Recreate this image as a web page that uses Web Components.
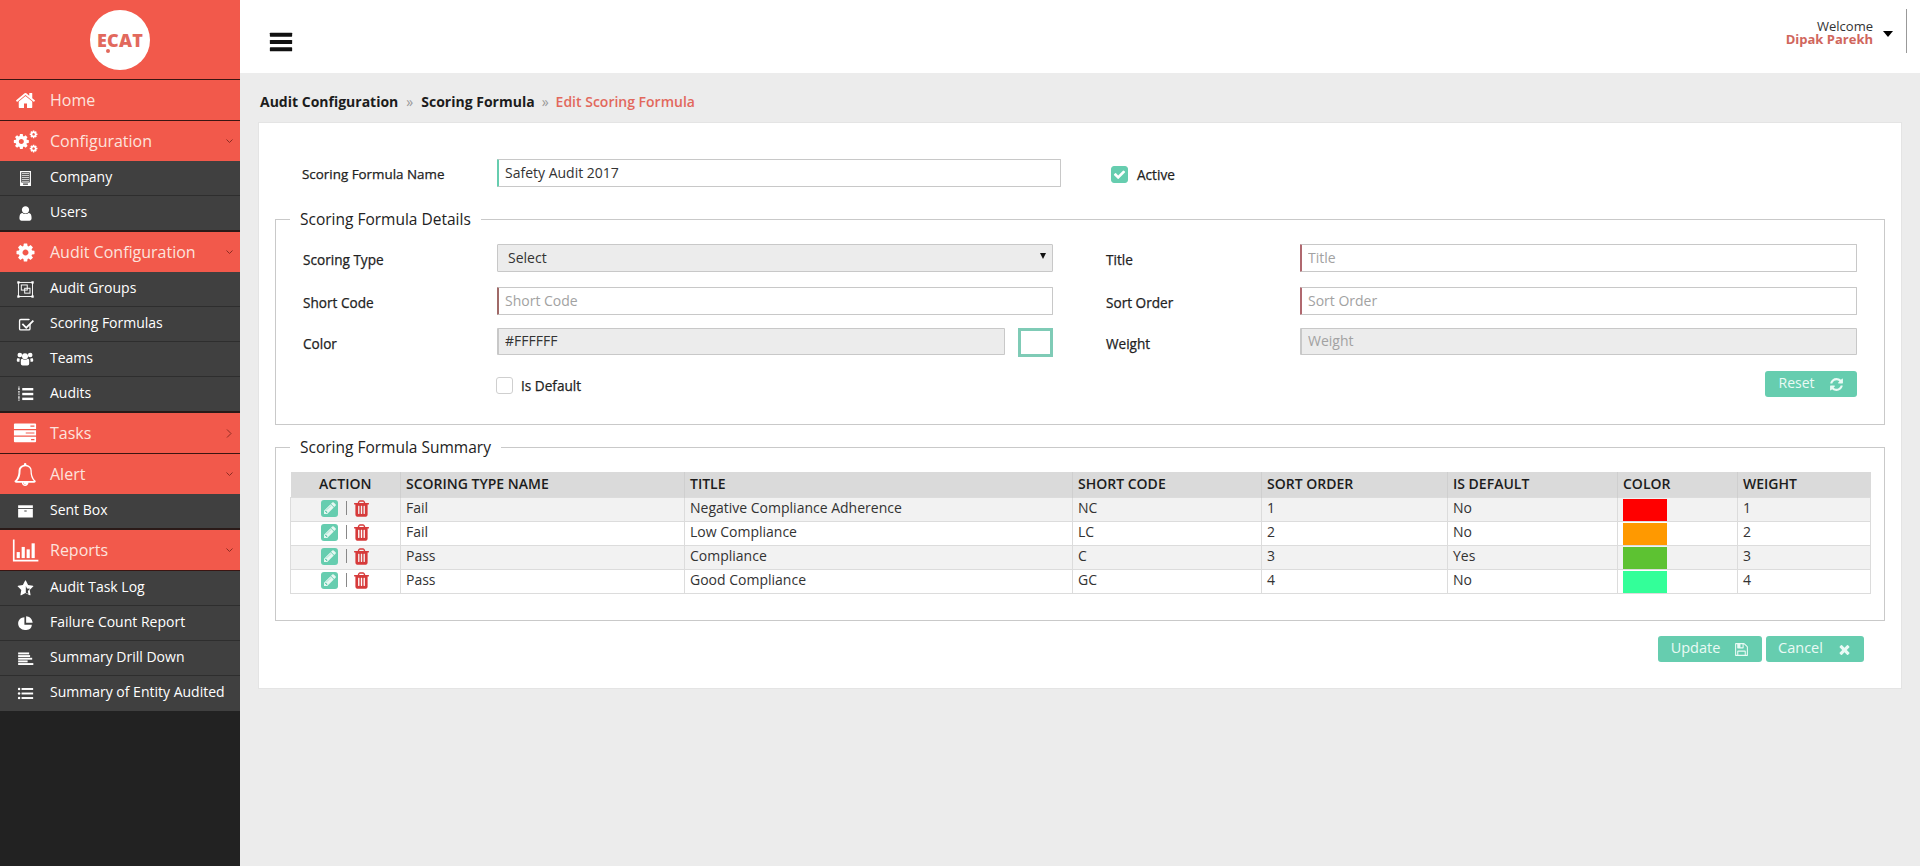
<!DOCTYPE html>
<html>
<head>
<meta charset="utf-8">
<title>Edit Scoring Formula</title>
<style>
  html, body { margin: 0; height: 100%; background: #ececec; }
  body { font-family: "Open Sans", sans-serif; color: #222; overflow: hidden; }
</style>
</head>
<body>
<ec-app>
  <ec-sidebar slot="sidebar">
    <ec-nav-head icon="home" line>Home</ec-nav-head>
    <ec-nav-head icon="cogs" chevron="down">Configuration</ec-nav-head>
    <ec-nav-item icon="building">Company</ec-nav-item>
    <ec-nav-item icon="user" last>Users</ec-nav-item>
    <ec-nav-head icon="cog" chevron="down">Audit Configuration</ec-nav-head>
    <ec-nav-item icon="group">Audit Groups</ec-nav-item>
    <ec-nav-item icon="checksq">Scoring Formulas</ec-nav-item>
    <ec-nav-item icon="users">Teams</ec-nav-item>
    <ec-nav-item icon="listol" last>Audits</ec-nav-item>
    <ec-nav-head icon="tasks" chevron="right" line>Tasks</ec-nav-head>
    <ec-nav-head icon="bell" chevron="down">Alert</ec-nav-head>
    <ec-nav-item icon="archive" last>Sent Box</ec-nav-item>
    <ec-nav-head icon="chart" chevron="down" line>Reports</ec-nav-head>
    <ec-nav-item icon="star">Audit Task Log</ec-nav-item>
    <ec-nav-item icon="pie">Failure Count Report</ec-nav-item>
    <ec-nav-item icon="align">Summary Drill Down</ec-nav-item>
    <ec-nav-item icon="list" end>Summary of Entity Audited</ec-nav-item>
  </ec-sidebar>
  <ec-header slot="header"></ec-header>
  <ec-breadcrumb>
    <span>Audit Configuration</span><span>Scoring Formula</span><span>Edit Scoring Formula</span>
  </ec-breadcrumb>
  <ec-card>
    <ec-name-row></ec-name-row>
    <ec-fieldset legend="Scoring Formula Details"><ec-details-form></ec-details-form></ec-fieldset>
    <ec-fieldset legend="Scoring Formula Summary" summary><ec-summary-table></ec-summary-table></ec-fieldset>
    <ec-actions></ec-actions>
  </ec-card>
</ec-app>

<script>
// font-awesome style glyphs on a 1792 grid, the rest drawn by hand
const COG = 'M1152 896q0-106-75-181t-181-75-181 75-75 181 75 181 181 75 181-75 75-181zm512-109v222q0 12-8 23t-20 13l-185 28q-19 54-39 91 35 50 107 138 10 12 10 25t-9 23q-27 37-99 108t-94 71q-12 0-26-9l-138-108q-44 23-91 38-16 136-29 186-7 28-36 28h-222q-14 0-24.5-8.5t-11.5-21.5l-28-184q-49-16-90-37l-141 107q-10 9-25 9-14 0-25-11-126-114-165-168-7-10-7-23 0-12 8-23 15-21 51-66.5t54-70.5q-27-50-41-99l-183-27q-13-2-21-12.5t-8-23.5v-222q0-12 8-23t19-13l186-28q14-46 39-92-40-57-107-138-10-12-10-24 0-10 9-23 26-36 98.5-107.5t94.5-71.5q13 0 26 10l138 107q44-23 91-38 16-136 29-186 7-28 36-28h222q14 0 24.5 8.5t11.5 21.5l28 184q49 16 90 37l142-107q9-9 24-9 13 0 25 10 129 119 165 170 7 8 7 22 0 12-8 23-15 21-51 66.5t-54 70.5q26 50 41 98l183 28q13 2 21 12.5t8 23.5z';
const STAR = 'M1728 647q0 22-26 48l-363 354 86 500q1 7 1 20 0 21-10.5 35.5t-30.5 14.5q-19 0-40-12l-449-236-449 236q-22 12-40 12-21 0-31.5-14.5t-10.5-35.5q0-6 2-20l86-500-364-354q-25-27-25-48 0-37 56-46l502-73 225-455q19-41 49-41t49 41l225 455 502 73q56 9 56 46z';
const ICONS = {
  home: '<path d="M1472 992v480q0 26-19 45t-45 19h-384v-384h-256v384h-384q-26 0-45-19t-19-45v-480q0-1 .5-3t.5-3l575-474 575 474q1 2 1 6zm223-69l-62 74q-8 9-21 11h-3q-13 0-21-7l-692-577-692 577q-12 8-24 7-13-2-21-11l-62-74q-8-10-7-23.5t11-21.5l719-599q32-26 76-26t76 26l244 204v-195q0-14 9-23t23-9h192q14 0 23 9t9 23v408l219 182q10 8 11 21.5t-7 23.5z"/>',
  cog: `<path d="${COG}"/>`,
  user: '<path d="M1536 1399q0 109-62.5 187t-150.5 78h-854q-88 0-150.5-78t-62.5-187q0-85 8.5-160.5t31.5-152 58.5-131 94-89 134.5-34.5q131 128 313 128t313-128q76 0 134.5 34.5t94 89 58.5 131 31.5 152 8.5 160.5zm-256-887q0 159-112.5 271.5t-271.5 112.5-271.5-112.5-112.5-271.5 112.5-271.5 271.5-112.5 271.5 112.5 112.5 271.5z"/>',
  bell: '<path d="M912 1696q0-16-16-16-59 0-101.5-42.5t-42.5-101.5q0-16-16-16t-16 16q0 73 51.5 124.5t124.5 51.5q16 0 16-16zm-666-288h1300q-266-300-266-832 0-51-24-105t-69-103-121.5-80.5-169.5-31.5-169.5 31.5-121.5 80.5-69 103-24 105q0 532-266 832zm1454 0q0 52-38 90t-90 38h-448q0 106-75 181t-181 75-181-75-75-181h-448q-52 0-90-38t-38-90q50-42 91-88t85-119.5 74.5-158.5 50-206 19.5-260q0-152 117-282.5t307-158.5q-8-19-8-39 0-40 28-68t68-28 68 28 28 68q0 20-8 39 190 28 307 158.5t117 282.5q0 139 19.5 260t50 206 74.5 158.5 85 119.5 91 88z"/>',
  star: `<path d="${STAR}"/><path fill="#404040" d="M930 620l130 270 320 45-235 225 55 320-270-140z"/>`,
  trash: '<path d="M704 1376v-704q0-14-9-23t-23-9h-64q-14 0-23 9t-9 23v704q0 14 9 23t23 9h64q14 0 23-9t9-23zm256 0v-704q0-14-9-23t-23-9h-64q-14 0-23 9t-9 23v704q0 14 9 23t23 9h64q14 0 23-9t9-23zm256 0v-704q0-14-9-23t-23-9h-64q-14 0-23 9t-9 23v704q0 14 9 23t23 9h64q14 0 23-9t9-23zm-544-992h448l-48-117q-7-9-17-11h-317q-10 2-17 11zm928 32v64q0 14-9 23t-23 9h-96v948q0 83-47 143.5t-113 60.5h-832q-66 0-113-58.5t-47-141.5v-952h-96q-14 0-23-9t-9-23v-64q0-14 9-23t23-9h309l70-167q15-37 54-63t79-26h320q40 0 79 26t54 63l70 167h309q14 0 23 9t9 23z"/>',
  pencil: '<path d="M491 1536l91-91-235-235-91 91v107h128v128h107zm523-928q0-22-22-22-10 0-17 7l-542 542q-7 7-7 17 0 22 22 22 10 0 17-7l542-542q7-7 7-17zm-54-192l416 416-832 832h-416v-416zm683 96q0 53-37 90l-166 166-416-416 166-165q36-38 90-38 53 0 91 38l235 234q37 39 37 91z"/>',
  close: '<path d="M1490 1322q0 40-28 68l-136 136q-28 28-68 28t-68-28l-294-294-294 294q-28 28-68 28t-68-28l-136-136q-28-28-28-68t28-68l294-294-294-294q-28-28-28-68t28-68l136-136q28-28 68-28t68 28l294 294 294-294q28-28 68-28t68 28l136 136q28 28 28 68t-28 68l-294 294 294 294q28 28 28 68z"/>',
  save: '<path d="M512 1536h768v-384h-768v384zm896 0h128v-896q0-14-10-38.5t-20-34.5l-281-281q-10-10-34-20t-39-10v416q0 40-28 68t-68 28h-576q-40 0-68-28t-28-68v-416h-128v1280h128v-416q0-40 28-68t68-28h832q40 0 68 28t28 68v416zm-384-928v-320q0-13-9.5-22.5t-22.5-9.5h-192q-13 0-22.5 9.5t-9.5 22.5v320q0 13 9.5 22.5t22.5 9.5h192q13 0 22.5-9.5t9.5-22.5zm640 32v928q0 40-28 68t-68 28h-1344q-40 0-68-28t-28-68v-1344q0-40 28-68t68-28h928q40 0 88 20t76 48l280 280q28 28 48 76t20 88z"/>',
  refresh: '<path d="M1639 1056q0 5-1 7-64 268-268 434.5t-478 166.5q-146 0-282.5-55t-243.5-157l-129 129q-19 19-45 19t-45-19-19-45v-448q0-26 19-45t45-19h448q26 0 45 19t19 45-19 45l-137 137q71 66 161 102t187 36q134 0 250-65t186-179q11-17 53-117 8-23 30-23h192q13 0 22.5 9.5t9.5 22.5zm25-800v448q0 26-19 45t-45 19h-448q-26 0-45-19t-19-45 19-45l138-138q-148-137-349-137-134 0-250 65t-186 179q-11 17-53 117-8 23-30 23h-199q-13 0-22.5-9.5t-9.5-22.5v-7q65-268 270-434.5t480-166.5q146 0 284 55.5t245 156.5l130-129q19-19 45-19t45 19 19 45z"/>',
  check: '<path d="M1671 566q0 40-28 68l-724 724-136 136q-28 28-68 28t-68-28l-136-136-362-362q-28-28-28-68t28-68l136-136q28-28 68-28t68 28l294 295 656-657q28-28 68-28t68 28l136 136q28 28 28 68z"/>',
  bars: '<rect x="128" y="260" width="1536" height="270" rx="40"/><rect x="128" y="761" width="1536" height="270" rx="40"/><rect x="128" y="1262" width="1536" height="270" rx="40"/>',
  cogs: `<g transform="translate(-30 269) scale(.7)"><path d="${COG}"/></g><g transform="translate(1154 57) scale(.36)"><path d="${COG}"/></g><g transform="translate(1154 1078) scale(.36)"><path d="${COG}"/></g>`,
  building: '<path fill-rule="evenodd" d="M320 100h1152v1592H320zM448 230v1080h896V230zM640 1420v130h512v-130z"/><g opacity=".75"><rect x="520" y="320" width="750" height="120"/><rect x="520" y="530" width="750" height="120"/><rect x="520" y="740" width="750" height="120"/><rect x="520" y="950" width="750" height="120"/><rect x="520" y="1150" width="750" height="90"/></g>',
  group: '<g fill="none" stroke="currentColor" stroke-width="90"><rect x="230" y="230" width="1330" height="1330"/><rect x="500" y="470" width="560" height="480"/><rect x="820" y="780" width="500" height="460"/></g><rect x="120" y="120" width="220" height="220"/><rect x="1450" y="120" width="220" height="220"/><rect x="120" y="1450" width="220" height="220"/><rect x="1450" y="1450" width="220" height="220"/>',
  checksq: '<path d="M400 300h840q80 0 130 40l-110 110q-20-10-40-10H400q-60 0-60 60v840q0 60 60 60h840q60 0 60-60V960l140-140v520q0 200-200 200H400q-200 0-200-200V500q0-200 200-200z"/><path d="M1660 420l130 130-820 820-470-470 130-130 340 340z"/>',
  users: '<circle cx="896" cy="620" r="300"/><circle cx="380" cy="500" r="230"/><circle cx="1412" cy="500" r="230"/><path d="M480 1000q0-120 130-140 130 110 286 110t286-110q130 20 130 140v360q0 180-180 180H660q-180 0-180-180z"/><path d="M80 960q0-140 120-170 90 90 210 70-60 50-60 170v130H180q-100 0-100-100zM1712 960q0-140-120-170-90 90-210 70 60 50 60 170v130h170q100 0 100-100z"/>',
  listol: '<rect x="620" y="300" width="1100" height="240"/><rect x="620" y="780" width="1100" height="240"/><rect x="620" y="1260" width="1100" height="240"/><rect x="200" y="170" width="180" height="70"/><rect x="200" y="300" width="180" height="70"/><rect x="200" y="430" width="180" height="70"/><rect x="200" y="620" width="180" height="70"/><rect x="200" y="750" width="180" height="70"/><rect x="200" y="880" width="180" height="70"/><rect x="200" y="1080" width="180" height="70"/><rect x="200" y="1210" width="180" height="70"/><rect x="200" y="1340" width="180" height="70"/><rect x="200" y="1470" width="180" height="70"/>',
  tasks: '<path fill-rule="evenodd" d="M70 250q0-70 70-70h1512q70 0 70 70v350H70zM1300 340v90h300v-90z"/><path fill-rule="evenodd" d="M70 690h1652v400H70zM950 850v90h650v-90z"/><path fill-rule="evenodd" d="M70 1180h1652v340q0 70-70 70H140q-70 0-70-70zM1350 1340v90h250v-90z"/>',
  archive: '<rect x="120" y="240" width="1550" height="300"/><path fill-rule="evenodd" d="M120 640h1550v900H120zM770 800v90h250v-90z"/>',
  chart: '<path d="M60 160h110v1350h1580v120H60z"/><rect x="310" y="1000" width="210" height="400"/><rect x="640" y="660" width="210" height="740"/><rect x="970" y="820" width="210" height="580"/><rect x="1300" y="420" width="210" height="980"/>',
  pie: '<path d="M780 240v780h780c0 420-340 560-720 560-400 0-720-300-720-680 0-360 300-660 660-660z"/><path d="M960 140c340 0 650 290 690 690H960z"/>',
  align: '<rect x="120" y="260" width="1160" height="200"/><rect x="120" y="540" width="1260" height="200"/><rect x="120" y="820" width="1480" height="200"/><rect x="120" y="1100" width="1000" height="200"/><rect x="120" y="1380" width="1600" height="200"/>',
  list: '<circle cx="220" cy="420" r="130"/><circle cx="220" cy="896" r="130"/><circle cx="220" cy="1372" r="130"/><rect x="480" y="320" width="1220" height="200"/><rect x="480" y="796" width="1220" height="200"/><rect x="480" y="1272" width="1220" height="200"/>'
};

class EcIcon extends HTMLElement {
  connectedCallback() {
    const size = this.getAttribute('size') || 16;
    const h = this.getAttribute('h') || size;
    this.attachShadow({ mode: 'open' }).innerHTML = `
      <style>:host { display: inline-flex; flex: none; } svg { display: block; fill: currentColor; }</style>
      <svg viewBox="0 0 1792 1792" width="${size}" height="${h}" preserveAspectRatio="none">${ICONS[this.getAttribute('name')] || ''}</svg>`;
  }
}

class EcApp extends HTMLElement {
  constructor() {
    super();
    this.attachShadow({ mode: 'open' }).innerHTML = `
      <style>
        :host { display: grid; grid-template-columns: 240px 1fr; height: 866px; }
        main { display: flex; flex-direction: column; min-width: 0; background: #ececec; }
        .page { padding: 0 18px; }
      </style>
      <slot name="sidebar"></slot>
      <main>
        <slot name="header"></slot>
        <div class="page"><slot></slot></div>
      </main>`;
  }
}

class EcSidebar extends HTMLElement {
  constructor() {
    super();
    this.attachShadow({ mode: 'open' }).innerHTML = `
      <style>
        :host { display: flex; flex-direction: column; background: #222; height: 866px; }
        .logo { height: 79px; background: #f2594b; border-bottom: 1px solid #3a1512; display: flex; align-items: center; justify-content: center; flex: none; }
        .disc { width: 60px; height: 60px; box-sizing: border-box; padding-top: 1px; border-radius: 50%; background: #fff; display: flex; align-items: center; justify-content: center; position: relative;
                color: #e2695d; font: 800 18px "Open Sans", sans-serif; letter-spacing: .2px; }
        .dot { position: absolute; left: 16px; top: 39px; width: 4px; height: 4px; border-radius: 50%; background: #e2695d; }
      </style>
      <div class="logo"><div class="disc">ECAT<span class="dot"></span></div></div>
      <slot></slot>`;
  }
}

const CHEVRONS = {
  down: '<path d="M.5 .5l3 3 3-3" fill="none" stroke="#8f2c22" stroke-width="1"/>',
  right: '<path d="M1 .5l4 4-4 4" fill="none" stroke="#8f2c22" stroke-width="1"/>'
};

class EcNavHead extends HTMLElement {
  connectedCallback() {
    const chev = this.getAttribute('chevron');
    const name = this.getAttribute('icon');
    const line = this.hasAttribute('line');
    const wide = { cogs: 25, tasks: 24, chart: 27, bell: 23 }[name] || 21;
    this.attachShadow({ mode: 'open' }).innerHTML = `
      <style>
        :host { display: flex; align-items: center; height: 40px; background: #f2594b; ${line ? 'border-bottom: 1px solid #3a1512;' : ''} flex: none; color: #fde3dd; font-size: 16px; position: relative; }
        .ic { width: 50px; display: flex; justify-content: center; color: #fff; }
        .ch { position: absolute; right: 7px; top: ${chev === 'right' ? 16 : 18}px; }
      </style>
      <span class="ic"><ec-icon name="${name}" size="${wide}"></ec-icon></span>
      <slot></slot>
      ${chev ? `<svg class="ch" width="7" height="9" viewBox="0 0 7 9">${CHEVRONS[chev]}</svg>` : ''}`;
  }
}

class EcNavItem extends HTMLElement {
  connectedCallback() {
    const name = this.getAttribute('icon');
    const last = this.hasAttribute('last');
    const end = this.hasAttribute('end');
    const size = { group: 19, users: 18, listol: 18 }[name] || 17;
    this.attachShadow({ mode: 'open' }).innerHTML = `
      <style>
        :host { display: flex; align-items: center; height: 34px; background: #404040; color: #fff; font-size: 14px; flex: none;
                border-bottom: 1px solid ${end ? '#404040' : '#2e2e2e'}; ${last ? 'border-bottom-width: 2px; border-bottom-color: #2a1a18;' : ''} }
        .ic { width: 50px; display: flex; justify-content: center; }
        .tx { margin-top: -3px; }
      </style>
      <span class="ic"><ec-icon name="${name}" size="${size}"></ec-icon></span>
      <span class="tx"><slot></slot></span>`;
  }
}

class EcHeader extends HTMLElement {
  constructor() {
    super();
    this.attachShadow({ mode: 'open' }).innerHTML = `
      <style>
        :host { display: flex; align-items: center; justify-content: space-between; height: 73px; background: #fff; padding: 0 13px 0 28px; box-sizing: border-box; flex: none; }
        .burger { color: #111; margin-top: 11px; }
        .user { display: flex; align-items: center; height: 44px; margin-top: -11px; border-right: 1px solid #999; }
        .who { text-align: right; font-size: 13px; line-height: 13px; color: #333; margin-top: 4px; }
        .who b { display: block; color: #d0665c; font-weight: 700; }
        .caret { width: 0; height: 0; border: 5px solid transparent; border-top: 6px solid #000; border-bottom: 0; margin: 6px 13px 0 10px; }
      </style>
      <ec-icon class="burger" name="bars" size="26" h="26"></ec-icon>
      <div class="user">
        <div class="who">Welcome<b>Dipak Parekh</b></div>
        <div class="caret"></div>
      </div>`;
  }
}

class EcBreadcrumb extends HTMLElement {
  constructor() {
    super();
    this.attachShadow({ mode: 'open' }).innerHTML = `
      <style>
        :host { display: flex; align-items: center; height: 49px; padding-top: 9px; box-sizing: border-box; font-size: 14px; font-weight: 700; color: #1c1c1c; margin-top: -1px; margin-left: 2px; }
        ::slotted(span) { white-space: nowrap; }
        ::slotted(span:not(:last-child))::after { content: "»"; color: #999; font-weight: 400; margin: 0 8px; }
        ::slotted(span:nth-child(2))::after { margin: 0 7px; }
        ::slotted(span:last-child) { color: #e2685c; font-weight: 600; }
      </style>
      <slot></slot>`;
  }
}

class EcCard extends HTMLElement {
  constructor() {
    super();
    this.attachShadow({ mode: 'open' }).innerHTML = `
      <style>
        :host { display: block; height: 567px; box-sizing: border-box; margin-top: 1px; background: #fff; border: 1px solid #e4e4e4; padding: 0 16px; }
      </style>
      <slot></slot>`;
  }
}

class EcInput extends HTMLElement {
  connectedCallback() {
    const accent = this.getAttribute('accent');
    const ph = this.getAttribute('placeholder') || '';
    const val = this.getAttribute('value') || '';
    const off = this.hasAttribute('disabled');
    const hgt = this.getAttribute('height') || 28;
    this.attachShadow({ mode: 'open' }).innerHTML = `
      <style>
        :host { display: block; }
        input { display: block; width: 100%; height: ${hgt}px; box-sizing: border-box; font: 14px "Open Sans", sans-serif; color: #333; padding: 0 6px 2px;
                border: 1px solid #c8c8c8; border-left: 2px solid ${accent || '#c8c8c8'}; border-radius: 1px; outline: 0; background: ${off ? '#ececec' : '#fff'}; }
        input::placeholder { color: #a2a2a2; opacity: 1; }
      </style>
      <input placeholder="${ph}" value="${val}" ${off ? 'disabled' : ''}>`;
  }
}

class EcSelect extends HTMLElement {
  connectedCallback() {
    this.attachShadow({ mode: 'open' }).innerHTML = `
      <style>
        :host { display: block; position: relative; }
        select { display: block; width: 100%; height: 28px; appearance: none; -webkit-appearance: none; background: #ececec; border: 1px solid #c8c8c8; border-radius: 1px; font: 14px "Open Sans", sans-serif; color: #333; padding: 0 10px 2px; outline: 0; }
        .tri { position: absolute; right: 7px; top: 9px; width: 0; height: 0; border: 3px solid transparent; border-top: 6px solid #111; border-bottom: 0; }
      </style>
      <select><option>Select</option></select><span class="tri"></span>`;
  }
}

class EcCheck extends HTMLElement {
  connectedCallback() {
    const on = this.hasAttribute('checked');
    this.attachShadow({ mode: 'open' }).innerHTML = `
      <style>
        :host { display: inline-flex; align-items: center; font-size: 13.6px; color: #222; -webkit-text-stroke: .25px #222; }
        .box { width: 17px; height: 17px; box-sizing: border-box; border-radius: 3px; margin-right: ${on ? 9 : 8}px; display: flex; align-items: center; justify-content: center;
               border: 1px solid ${on ? '#66cdaf' : '#cfcfcf'}; background: ${on ? '#66cdaf' : '#fff'}; color: #fff; }
        .tx { margin-top: 0; }
      </style>
      <span class="box">${on ? '<ec-icon name="check" size="13"></ec-icon>' : ''}</span>
      <span class="tx"><slot></slot></span>`;
  }
}

class EcButton extends HTMLElement {
  connectedCallback() {
    const w = this.getAttribute('width');
    const ic = this.getAttribute('icon');
    this.attachShadow({ mode: 'open' }).innerHTML = `
      <style>
        :host { display: inline-flex; align-items: center; justify-content: center; gap: 14px; width: ${w}px; height: 26px; background: #66cdaf; color: #eafaf5; font-size: 14px; border-radius: 3px; }
        .tx { margin-top: -3px; }
      </style>
      <span class="tx"><slot></slot></span><ec-icon name="${ic}" size="15"></ec-icon>`;
  }
}

class EcNameRow extends HTMLElement {
  constructor() {
    super();
    this.attachShadow({ mode: 'open' }).innerHTML = `
      <style>
        :host { display: flex; align-items: flex-start; padding: 36px 0 0 27px; height: 86px; box-sizing: border-box; }
        label { width: 195px; font-size: 13.4px; color: #222; -webkit-text-stroke: .25px #222; margin-top: 6px; flex: none; }
        ec-input { width: 564px; flex: none; }
        ec-check { margin: 6px 0 0 50px; }
      </style>
      <label>Scoring Formula Name</label>
      <ec-input accent="#66cdaf" value="Safety Audit 2017"></ec-input>
      <ec-check checked>Active</ec-check>`;
  }
}

class EcFieldset extends HTMLElement {
  connectedCallback() {
    const summary = this.hasAttribute('summary');
    this.attachShadow({ mode: 'open' }).innerHTML = `
      <style>
        :host { display: block; margin-bottom: ${summary ? 0 : 12}px; }
        fieldset { margin: 0; border: 1px solid #c9c9c9; padding: 0 14px; min-width: 0; height: ${summary ? 184 : 216}px; box-sizing: border-box; }
        legend { font-size: 15.5px; padding: 0 10px; margin-left: 0; color: #222; line-height: 20px; }
      </style>
      <fieldset><legend>${this.getAttribute('legend')}</legend><slot></slot></fieldset>`;
  }
}

class EcDetailsForm extends HTMLElement {
  constructor() {
    super();
    this.attachShadow({ mode: 'open' }).innerHTML = `
      <style>
        :host { display: grid; grid-template-columns: 194px 556px 53px 194px 557px; grid-template-rows: 29px 27px 29px 26px; row-gap: 14px; padding: 15px 0 0 13px; }
        label { font-size: 13.6px; color: #222; -webkit-text-stroke: .25px #222; margin-top: 6px; }
        .color { display: flex; gap: 13px; }
        .color ec-input { flex: 1; }
        .swatch { width: 35px; height: 29px; box-sizing: border-box; border: 3px solid #7fcbb6; flex: none; }
        .dflt { grid-column: 2; margin: 5px 0 0 -1px; align-self: start; }
        .reset { grid-column: 5; justify-self: end; }
      </style>
      <label>Scoring Type</label><ec-select></ec-select><span></span>
      <label>Title</label><ec-input accent="#b0686f" placeholder="Title"></ec-input>
      <label>Short Code</label><ec-input accent="#a06a68" placeholder="Short Code"></ec-input><span></span>
      <label>Sort Order</label><ec-input accent="#b0686f" placeholder="Sort Order"></ec-input>
      <label>Color</label><div class="color"><ec-input disabled value="#FFFFFF" height="27"></ec-input><div class="swatch"></div></div><span></span>
      <label>Weight</label><ec-input disabled placeholder="Weight" height="27"></ec-input>
      <ec-check class="dflt">Is Default</ec-check>
      <ec-button class="reset" width="92" icon="refresh">Reset</ec-button>`;
  }
}

class EcSummaryTable extends HTMLElement {
  constructor() {
    super();
    const rows = [
      ['Fail', 'Negative Compliance Adherence', 'NC', '1', 'No', '#ff0000', '1'],
      ['Fail', 'Low Compliance', 'LC', '2', 'No', '#ff9900', '2'],
      ['Pass', 'Compliance', 'C', '3', 'Yes', '#5dc232', '3'],
      ['Pass', 'Good Compliance', 'GC', '4', 'No', '#33ff99', '4']
    ];
    const body = rows.map(r => `
      <tr>
        <td class="act"><span class="edit"><ec-icon name="pencil" size="14"></ec-icon></span><span class="sep"></span><ec-icon class="del" name="trash" size="19"></ec-icon></td>
        <td>${r[0]}</td><td>${r[1]}</td><td>${r[2]}</td><td>${r[3]}</td><td>${r[4]}</td>
        <td class="sw"><div style="background:${r[5]}"></div></td><td>${r[6]}</td>
      </tr>`).join('');
    this.attachShadow({ mode: 'open' }).innerHTML = `
      <style>
        :host { display: block; padding-top: 15px; }
        table { width: 1580px; border-collapse: collapse; table-layout: fixed; font-size: 14px; }
        th { height: 25px; padding: 0 5px 2px; background: #dadada; font-weight: 600; text-align: left; color: #1c1c1c; border: 0; border-left: 1px solid #cfcfcf; box-sizing: border-box; white-space: nowrap; }
        th:first-child { text-align: center; border-left: 0; }
        td { height: 24px; padding: 0 5px 4px; border: 1px solid #dcdcdc; color: #333; box-sizing: border-box; }
        tbody tr:nth-child(odd) { background: #f2f2f2; }
        .act { padding: 0 0 2px; text-align: center; line-height: 0; }
        .act > * { vertical-align: middle; }
        .edit { display: inline-flex; align-items: center; justify-content: center; width: 17px; height: 17px; border-radius: 3px; background: #66cdaf; color: #e6f7f1; }
        .sep { display: inline-block; width: 1px; height: 14px; background: #888; margin: 0 5px 0 8px; }
        .del { color: #d63a3a; margin-right: -1px; }
        .sw { padding: 0 0 0 5px; }
        .sw div { width: 44px; height: 22px; margin-top: 1px; }
      </style>
      <table>
        <colgroup><col width="110"><col width="284"><col width="388"><col width="189"><col width="186"><col width="170"><col width="120"><col width="133"></colgroup>
        <thead><tr><th>ACTION</th><th>SCORING TYPE NAME</th><th>TITLE</th><th>SHORT CODE</th><th>SORT ORDER</th><th>IS DEFAULT</th><th>COLOR</th><th>WEIGHT</th></tr></thead>
        <tbody>${body}</tbody>
      </table>`;
  }
}

class EcActions extends HTMLElement {
  constructor() {
    super();
    this.attachShadow({ mode: 'open' }).innerHTML = `
      <style>
        :host { display: flex; justify-content: flex-end; gap: 4px; padding: 15px 21px 0 0; }
      </style>
      <ec-button width="104" icon="save" style="font-size:14.5px">Update</ec-button>
      <ec-button width="98" icon="close" style="font-size:14.5px">Cancel</ec-button>`;
  }
}

[['ec-icon', EcIcon], ['ec-app', EcApp], ['ec-sidebar', EcSidebar], ['ec-nav-head', EcNavHead], ['ec-nav-item', EcNavItem],
 ['ec-header', EcHeader], ['ec-breadcrumb', EcBreadcrumb], ['ec-card', EcCard], ['ec-input', EcInput], ['ec-select', EcSelect],
 ['ec-check', EcCheck], ['ec-button', EcButton], ['ec-name-row', EcNameRow], ['ec-fieldset', EcFieldset],
 ['ec-details-form', EcDetailsForm], ['ec-summary-table', EcSummaryTable], ['ec-actions', EcActions]
].forEach(([tag, cls]) => customElements.define(tag, cls));
</script>
</body>
</html>
